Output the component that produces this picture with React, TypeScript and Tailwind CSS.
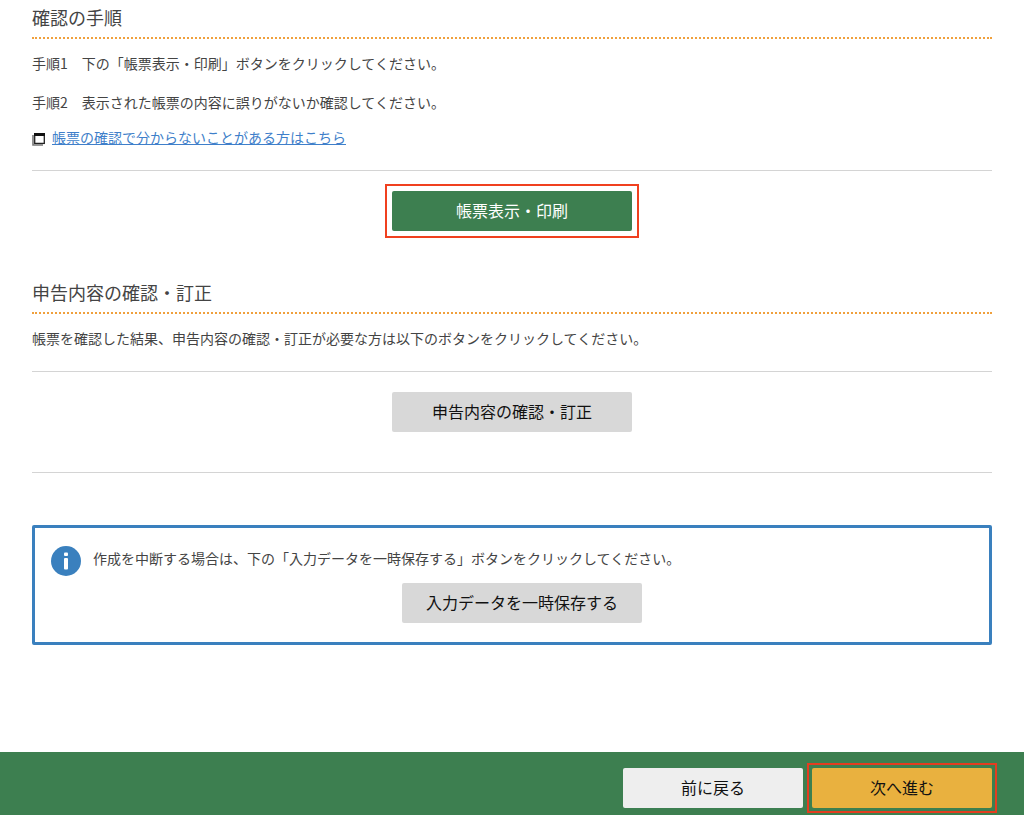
import type { ReactNode } from 'react';

const SectionTitle = ({ children }: { children: ReactNode }) => (
  <h2 className="border-b-2 border-dotted border-[#f0a03c] pb-1.5 text-lg leading-[27px] text-[#444]">
    {children}
  </h2>
);

const WindowIcon = () => (
  <svg className="mt-1 h-[13px] w-[13px]" viewBox="0 0 13 13" fill="none" aria-hidden="true">
    <path d="M1 2v10h10" stroke="#777" strokeWidth="1.6" />
    <rect x="2.7" y="1" width="9.6" height="9.4" fill="#fff" stroke="#222" strokeWidth="1.3" />
    <path d="M2 0h11v3H2z" fill="#111" />
  </svg>
);

const InfoIcon = () => (
  <svg className="h-[30px] w-[30px] shrink-0" viewBox="0 0 30 30" aria-hidden="true">
    <circle cx="15" cy="15" r="15" fill="#3a80be" />
    <rect x="13" y="6.5" width="4" height="3.6" rx="1" fill="#fff" />
    <rect x="13" y="12" width="4" height="11.5" rx="1" fill="#fff" />
  </svg>
);

const App = () => {
  return (
    <div className="bg-white font-['Noto_Sans_CJK_JP',sans-serif] text-sm leading-[21px] text-[#444]">
      <main className="px-8 pt-1">
        <section>
          <SectionTitle>確認の手順</SectionTitle>
          <p className="mt-3.5">手順1　下の「帳票表示・印刷」ボタンをクリックしてください。</p>
          <p className="mt-[18px]">手順2　表示された帳票の内容に誤りがないか確認してください。</p>
          <div className="mt-3.5 flex items-center gap-[7px]">
            <WindowIcon />
            <a href="#help" className="text-[#3f7fca] underline">
              帳票の確認で分からないことがある方はこちら
            </a>
          </div>
          <div className="mt-[22px] flex justify-center border-t border-[#d4d4d4] pt-[13px]">
            <div className="border-2 border-[#f0401f] p-[5px]">
              <button type="button" className="h-10 w-60 rounded-xs bg-[#3d7f50] pb-0.5 text-base text-white">
                帳票表示・印刷
              </button>
            </div>
          </div>
        </section>

        <section className="mt-[41px]">
          <SectionTitle>申告内容の確認・訂正</SectionTitle>
          <p className="mt-3.5">
            帳票を確認した結果、申告内容の確認・訂正が必要な方は以下のボタンをクリックしてください。
          </p>
          <div className="mt-[22px] flex justify-center border-y border-[#d4d4d4] pt-5 pb-10">
            <button type="button" className="h-10 w-60 rounded-xs bg-[#d8d8d8] pb-0.5 text-base text-[#111]">
              申告内容の確認・訂正
            </button>
          </div>
        </section>

        <section className="mt-[52px] flex items-start gap-3 rounded-xs border-3 border-[#3a80be] pt-[18px] pr-[38px] pb-[19px] pl-4">
          <InfoIcon />
          <div className="flex-1">
            <p className="pt-0.5">
              作成を中断する場合は、下の「入力データを一時保存する」ボタンをクリックしてください。
            </p>
            <div className="mt-3.5 flex justify-center">
              <button type="button" className="h-10 w-60 rounded-xs bg-[#d8d8d8] pb-0.5 text-base text-[#111]">
                入力データを一時保存する
              </button>
            </div>
          </div>
        </section>
      </main>

      <footer className="mt-[107px] flex items-center justify-end gap-1 bg-[#3d7f50] pt-[11px] pr-[27px] pb-0.5">
        <button type="button" className="h-10 w-[180px] rounded-xs bg-[#eee] pb-0.5 text-base text-[#111]">
          前に戻る
        </button>
        <div className="border-2 border-[#e33d20] p-[3px]">
          <button type="button" className="h-10 w-[180px] rounded-xs bg-[#e9b13f] pb-0.5 text-base text-[#111]">
            次へ進む
          </button>
        </div>
      </footer>
    </div>
  );
};

export default App;
